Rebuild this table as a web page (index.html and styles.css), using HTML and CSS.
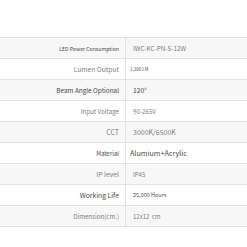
FILE: index.html
```html
<!DOCTYPE html>
<html>
<head>
<meta charset="utf-8">
<link rel="stylesheet" href="styles.css">
</head>
<body>
<div class="spec">
  <div class="row alt"><div class="k f52 dark">LED Power Consumption</div><div class="v f64">IWC-KC-PN-S-12W</div></div>
  <div class="row"><div class="k f67">Lumen Output</div><div class="v near f45 dark">1,200 LM</div></div>
  <div class="row alt"><div class="k f64 dark">Beam Angle Optional</div><div class="v f68 dark">120°</div></div>
  <div class="row"><div class="k f62">Input Voltage</div><div class="v f62">90-265V</div></div>
  <div class="row alt"><div class="k f70">CCT</div><div class="v f70">3000K/6500K</div></div>
  <div class="row"><div class="k f60 dark">Material</div><div class="v near f72 dark">Alumium+Acrylic</div></div>
  <div class="row alt"><div class="k f68">IP level</div><div class="v f60">IP45</div></div>
  <div class="row"><div class="k f68 dark">Working Life</div><div class="v f55 dark">25,000 Hours</div></div>
  <div class="row alt"><div class="k f62">Dimension(cm.)</div><div class="v f60">12x12&nbsp;&nbsp;cm</div></div>
</div>
</body>
</html>
```
FILE: styles.css
```css
html, body {
  margin: 0;
  padding: 0;
  background: #ffffff;
}
body {
  font-family: "Noto Sans CJK KR", "Noto Sans", sans-serif;
  color: #808080;
}
.spec {
  margin-top: 37px;
  border-top: 1px solid #e2e2e2;
}
.row {
  display: grid;
  grid-template-columns: 126px 1fr;
  height: 20px;
  border-bottom: 1px solid #e2e2e2;
  background: #ffffff;
}
.row.alt {
  background: #f7f7f7;
}
.k {
  border-right: 1px solid #e2e2e2;
  padding-right: 6px;
  display: flex;
  align-items: center;
  justify-content: flex-end;
  white-space: nowrap;
}
.v {
  padding-left: 7px;
  display: flex;
  align-items: center;
  white-space: nowrap;
}
.v.near {
  padding-left: 4px;
}
.dark { color: #4a4a4a; }
.f45 { font-size: 4.5px; }
.f52 { font-size: 5.2px; }
.f55 { font-size: 5.5px; }
.f60 { font-size: 6px; }
.f62 { font-size: 6.2px; }
.f64 { font-size: 6.4px; }
.f67 { font-size: 6.7px; }
.f68 { font-size: 6.8px; }
.f70 { font-size: 7px; }
.f72 { font-size: 7.2px; }
```
